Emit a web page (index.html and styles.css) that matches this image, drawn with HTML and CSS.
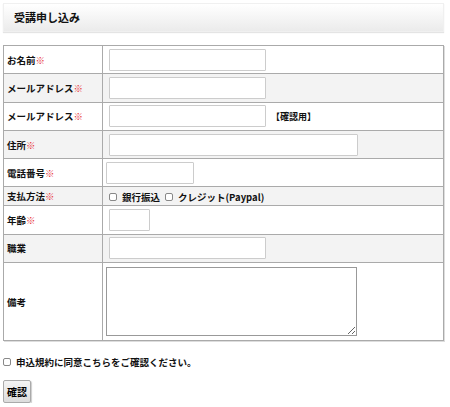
FILE: index.html
```
<!DOCTYPE html>
<html lang="ja">
<head>
<meta charset="utf-8">
<link rel="stylesheet" href="styles.css">
</head>
<body>
<div class="page">
  <h2 class="title">受講申し込み</h2>
  <table class="form">
    <tr class="r28">
      <th>お名前<span class="req">※</span></th>
      <td><input class="txt w156" type="text"></td>
    </tr>
    <tr class="r28 alt">
      <th>メールアドレス<span class="req">※</span></th>
      <td><input class="txt w156" type="text"></td>
    </tr>
    <tr class="r28">
      <th>メールアドレス<span class="req">※</span></th>
      <td><input class="txt w156" type="text"><span class="note">【確認用】</span></td>
    </tr>
    <tr class="r28 alt">
      <th>住所<span class="req">※</span></th>
      <td><input class="txt w248" type="text"></td>
    </tr>
    <tr class="r28">
      <th>電話番号<span class="req">※</span></th>
      <td class="tight"><input class="txt w87" type="text"></td>
    </tr>
    <tr class="r20 alt">
      <th>支払方法<span class="req">※</span></th>
      <td><label class="opt"><input class="cb" type="checkbox">銀行振込</label><label class="opt"><input class="cb" type="checkbox">クレジット(Paypal)</label></td>
    </tr>
    <tr class="r28">
      <th>年齢<span class="req">※</span></th>
      <td><input class="txt w40" type="text"></td>
    </tr>
    <tr class="r28 alt">
      <th>職業</th>
      <td><input class="txt w156" type="text"></td>
    </tr>
    <tr class="r78">
      <th>備考</th>
      <td class="tight"><textarea class="area"></textarea></td>
    </tr>
  </table>
  <div class="agree"><input class="cb" type="checkbox"><span>申込規約に同意こちらをご確認ください。</span></div>
  <button class="btn" type="button">確認</button>
</div>
</body>
</html>
```
FILE: styles.css
```
html, body {
  margin: 0;
  padding: 0;
  background: #fff;
}
body {
  font-family: "Noto Sans CJK JP", "Liberation Sans", sans-serif;
  font-size: 10px;
  color: #111;
}
.page {
  padding: 3px 6px 0 3px;
}
.title {
  margin: 0;
  height: 27px;
  line-height: 27px;
  padding-left: 10px;
  font-size: 11px;
  font-weight: bold;
  background: linear-gradient(#ffffff, #ebebeb);
  border: 1px solid #f0f0f0;
  box-shadow: 0 1px 1px #e4e4e4;
}
.form {
  margin-top: 13px;
  width: 441px;
  border-collapse: collapse;
  border: 1px solid #999;
  box-shadow: 1px 1px 0 #ddd;
}
.form th, .form td {
  border: 1px solid #aaa;
  padding: 0 0 0 6px;
  vertical-align: middle;
}
.form th {
  width: 95px;
  text-align: left;
  font-weight: bold;
  padding-left: 3px;
  font-size: 9.5px;
}
.form td.tight {
  padding-left: 3px;
}
.r28 { height: 28.3px; }
.r20 { height: 19px; }
.r78 { height: 78px; }
.alt th, .alt td { background: #f3f3f3; }
.req { color: #e8383d; font-weight: bold; }
.txt {
  box-sizing: border-box;
  height: 22px;
  border: 1px solid #ccc;
  border-radius: 1px;
  background: #fff;
  vertical-align: middle;
  margin: 0;
  padding: 0;
}
.w156 { width: 157px; }
.w248 { width: 249px; }
.w87 { width: 88px; }
.w40 { width: 41px; }
.note {
  margin-left: 5px;
  font-weight: bold;
  font-size: 9px;
  vertical-align: middle;
}
.opt {
  font-weight: bold;
  font-size: 9.5px;
  margin-right: 5px;
  display: inline-flex;
  align-items: center;
}
.cb {
  appearance: none;
  -webkit-appearance: none;
  width: 8px;
  height: 8px;
  border: 1px solid #888;
  border-radius: 2px;
  background: #fff;
  margin: 0 5px 0 0;
  padding: 0;
}
.area {
  box-sizing: border-box;
  display: block;
  width: 251px;
  height: 69px;
  border: 1px solid #999;
  margin: 0;
  resize: both;
}
.agree {
  margin-top: 14px;
  display: flex;
  align-items: center;
  font-weight: bold;
  font-size: 9.5px;
}
.btn {
  display: block;
  margin-top: 11px;
  height: 23px;
  width: 28px;
  padding: 0;
  font-family: "Noto Sans CJK JP", sans-serif;
  font-size: 10px;
  font-weight: bold;
  background: linear-gradient(#f4f4f4, #dcdcdc);
  border: 1px solid #aaa;
  border-radius: 2px;
  box-shadow: 1px 1px 1px #ccc;
}
```
